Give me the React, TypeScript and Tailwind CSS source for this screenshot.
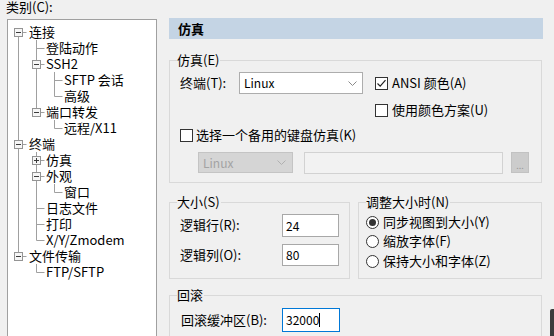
import React from "react";

type Item = { t: string; l: 0 | 1 | 2; e?: "-" | "+" };

const items: Item[] = [
  { t: "连接", l: 0, e: "-" },
  { t: "登陆动作", l: 1 },
  { t: "SSH2", l: 1, e: "-" },
  { t: "SFTP 会话", l: 2 },
  { t: "高级", l: 2 },
  { t: "端口转发", l: 1, e: "-" },
  { t: "远程/X11", l: 2 },
  { t: "终端", l: 0, e: "-" },
  { t: "仿真", l: 1, e: "+" },
  { t: "外观", l: 1, e: "-" },
  { t: "窗口", l: 2 },
  { t: "日志文件", l: 1 },
  { t: "打印", l: 1 },
  { t: "X/Y/Zmodem", l: 1 },
  { t: "文件传输", l: 0, e: "-" },
  { t: "FTP/SFTP", l: 1 },
];

const pad = ["pl-[21px]", "pl-[38px]", "pl-[56px]"];
const lx = [18.5, 36.5, 54.5];

function TreeLines() {
  const vlines: [number, number, number][] = [
    [18.5, 32, 256],
    [36.5, 40, 112],
    [54.5, 72, 96],
    [54.5, 120, 128],
    [36.5, 152, 240],
    [54.5, 184, 192],
    [36.5, 264, 272],
  ];
  return (
    <svg className="absolute left-0 top-0 pointer-events-none" width="148" height="318">
      <g transform="translate(-8,-20)">
        {vlines.map(([x, y1, y2], i) => (
          <line key={i} x1={x} y1={y1} x2={x} y2={y2 + 0.5} stroke="#a0a0a0" strokeWidth="1" />
        ))}
        {items.map((it, i) => {
          const yc = 32.5 + 16 * i;
          const x = lx[it.l];
          return <line key={"h" + i} x1={x} y1={yc} x2={x + 8} y2={yc} stroke="#a0a0a0" strokeWidth="1" />;
        })}
        {items.map((it, i) => {
          if (!it.e) return null;
          const yc = 32.5 + 16 * i;
          const x = lx[it.l];
          return (
            <g key={"e" + i}>
              <rect x={x - 4} y={yc - 4} width="8" height="8" fill="#f6f6f6" stroke="#949494" strokeWidth="1" />
              <line x1={x - 2.5} y1={yc} x2={x + 2.5} y2={yc} stroke="#3c3c3c" strokeWidth="1" />
              {it.e === "+" && <line x1={x} y1={yc - 2.5} x2={x} y2={yc + 2.5} stroke="#3c3c3c" strokeWidth="1" />}
            </g>
          );
        })}
      </g>
    </svg>
  );
}

function Check({ checked }: { checked?: boolean }) {
  return (
    <span className="w-[13px] h-[13px] border border-[#333333] bg-white shrink-0 flex items-center justify-center">
      {checked && (
        <svg width="11" height="11" viewBox="0 0 11 11">
          <path d="M1.5 5.5 L4.2 8.2 L9.5 2.2" stroke="#222222" strokeWidth="1.2" fill="none" />
        </svg>
      )}
    </span>
  );
}

function Radio({ on }: { on?: boolean }) {
  return (
    <span className="w-[13px] h-[13px] rounded-full border border-[#333333] bg-white shrink-0 flex items-center justify-center">
      {on && <span className="w-[7px] h-[7px] rounded-full bg-[#333333]" />}
    </span>
  );
}

function Chevron({ color }: { color: string }) {
  return (
    <svg width="9" height="5" viewBox="0 0 9 5">
      <path d="M0.5 0.5 L4.5 4.5 L8.5 0.5" stroke={color} strokeWidth="1" fill="none" />
    </svg>
  );
}

function Group({ label, className, children }: { label: string; className: string; children?: React.ReactNode }) {
  return (
    <div className={"relative border border-[#d9d9d9] " + className}>
      <span className="absolute -top-[9px] left-[7px] bg-[#f0f0f0] pr-[1px] leading-[16px]">{label}</span>
      {children}
    </div>
  );
}

export default function App() {
  return (
    <div className="w-[554px] h-[336px] overflow-hidden bg-[#f0f0f0] flex font-['Noto_Sans_CJK_SC',sans-serif] text-[13px] leading-[16px] text-black">
      {/* left column */}
      <div className="w-[157px] shrink-0 flex flex-col">
        <div className="h-[19px] shrink-0 pl-[6px] leading-[13px]">类别(C):</div>
        <div className="ml-[7px] w-[150px] h-[317px] shrink-0 border border-b-0 border-[#a0a0a0] bg-white relative pt-[4px] overflow-hidden">
          <TreeLines />
          {items.map((it, i) => (
            <div key={i} className={"h-[16px] leading-[16px] whitespace-nowrap " + pad[it.l]}>
              {it.t}
            </div>
          ))}
        </div>
      </div>

      {/* right column */}
      <div className="ml-[12px] w-[374px] shrink-0 pt-[18px] flex flex-col">
        <div className="h-[21px] shrink-0 bg-[#c4d4e4] pl-[9px] font-bold leading-[21px]">仿真</div>

        <Group label="仿真(E)" className="mt-[21px] shrink-0 w-[373px] h-[123px] pt-[11px] pl-[10px]">
          <div className="flex items-center h-[22px]">
            <span className="w-[59px]">终端(T):</span>
            <div className="w-[124px] h-[22px] border border-[#adadad] bg-white flex items-center justify-between pl-[4px] pr-[5px] text-[12px]">
              <span>Linux</span>
              <Chevron color="#8a8a8a" />
            </div>
            <div className="ml-[12px] flex items-center gap-[4px]">
              <Check checked />
              <span>ANSI 颜色(A)</span>
            </div>
          </div>
          <div className="mt-[8px] ml-[195px] h-[16px] flex items-center gap-[4px]">
            <Check />
            <span>使用颜色方案(U)</span>
          </div>
          <div className="mt-[9px] h-[16px] flex items-center gap-[3px]">
            <Check />
            <span>选择一个备用的键盘仿真(K)</span>
          </div>
          <div className="mt-[9px] ml-[18px] flex items-start">
            <div className="w-[95px] h-[21px] border border-[#c4c4c4] bg-[#d5d5d5] flex items-center justify-between pl-[4px] pr-[6px] text-[12px] text-[#a3a3a3]">
              <span>Linux</span>
              <Chevron color="#b0b0b0" />
            </div>
            <div className="ml-[11px] w-[199px] h-[22px] border border-[#d2d2d2] bg-[#f2f2f2]" />
            <div className="ml-[8px] w-[18px] h-[21px] border border-[#c2c2c2] bg-[#cccccc] flex items-end justify-center text-[9px] leading-[12px] text-[#9a9a9a]">
              ...
            </div>
          </div>
        </Group>

        <div className="mt-[19px] shrink-0 flex gap-[8px]">
          <Group label="大小(S)" className="w-[181px] h-[77px] pt-[11px] pl-[10px]">
            <div className="flex items-center h-[22px]">
              <span className="w-[102px]">逻辑行(R):</span>
              <div className="w-[57px] h-[23px] border border-[#a8a8a8] bg-white pl-[3px] leading-[21px] text-[12px]">24</div>
            </div>
            <div className="mt-[8px] flex items-center h-[22px]">
              <span className="w-[102px]">逻辑列(O):</span>
              <div className="w-[57px] h-[22px] border border-[#a8a8a8] bg-white pl-[3px] leading-[20px] text-[12px]">80</div>
            </div>
          </Group>
          <Group label="调整大小时(N)" className="w-[184px] h-[77px] pt-[11px] pl-[7px]">
            <div className="h-[16px] flex items-center gap-[4px]">
              <Radio on />
              <span>同步视图到大小(Y)</span>
            </div>
            <div className="mt-[3px] h-[16px] flex items-center gap-[4px]">
              <Radio />
              <span>缩放字体(F)</span>
            </div>
            <div className="mt-[4px] h-[16px] flex items-center gap-[4px]">
              <Radio />
              <span>保持大小和字体(Z)</span>
            </div>
          </Group>
        </div>

        <Group label="回滚" className="mt-[16px] shrink-0 w-[373px] h-[60px] pt-[12px] pl-[11px]">
          <div className="flex items-center h-[23px]">
            <span className="w-[101px]">回滚缓冲区(B):</span>
            <div className="w-[58px] h-[24px] border border-[#0078d7] bg-white pl-[3px] flex items-center text-[12px]">
              <span>32000</span>
              <span className="w-[1px] h-[14px] bg-black" />
            </div>
          </div>
        </Group>
      </div>

      <div className="ml-[7px] mt-[309px] w-[4px] h-[27px] bg-[#3c3c3c] rounded-tl-[2px] shrink-0" />
    </div>
  );
}
